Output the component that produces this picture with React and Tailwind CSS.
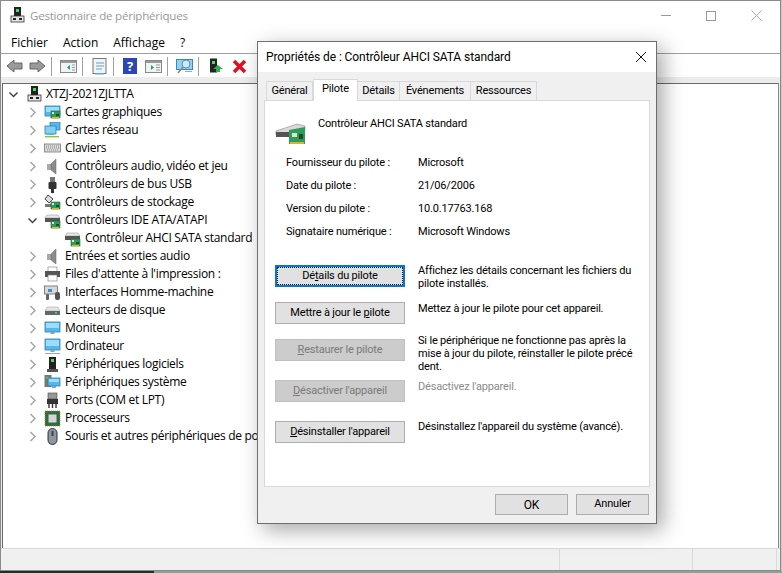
import React from 'react';

const Board = ({ x = 8, y = 9 }) => (
  <g>
    <rect x={x} y={y} width="9" height="7" fill="#2f9a5b" stroke="#1f6a3d" strokeWidth="0.6" />
    <rect x={x + 1} y={y + 1} width="2" height="2" fill="#d7e8c8" />
    <rect x={x + 5} y={y + 3} width="3" height="2" fill="#14502c" />
    <rect x={x + 1} y={y + 6} width="7" height="1.4" fill="#e2b029" />
  </g>
);

const Tower = () => (
  <g>
    <rect x="5" y="1" width="7" height="12" fill="#222" />
    <rect x="7" y="3" width="3" height="3" fill="#4bd964" />
    <rect x="3" y="13" width="11" height="3" fill="#555" />
  </g>
);

const Screen = ({ x = 1, y = 2, w = 15, h = 10 }) => (
  <g>
    <rect x={x} y={y} width={w} height={h} fill="#56b7ea" stroke="#2d7fb3" strokeWidth="0.8" />
    <rect x={x + 1} y={y + 1} width={w - 2} height={h - 5} fill="#9ddcfa" />
    <rect x={x + w / 2 - 2} y={y + h} width="4" height="2" fill="#8fa3ad" />
  </g>
);

const Drive = () => (
  <g>
    <path d="M3 3 L14 3 L16 6 L1 6 Z" fill="#e8e8e8" stroke="#888" strokeWidth="0.5" />
    <rect x="1" y="6" width="15" height="4" fill="#555" />
  </g>
);

const drawings = {
  host: (
    <g>
      <rect x="5" y="0" width="7" height="9" fill="#222" />
      <rect x="7" y="2" width="3" height="3" fill="#4bd964" />
      <rect x="2" y="9" width="13" height="6" fill="#e4e4e4" stroke="#333" strokeWidth="0.8" />
      <rect x="4" y="11" width="3" height="2" fill="#222" />
      <rect x="10" y="11" width="3" height="2" fill="#222" />
    </g>
  ),
  gpu: <g><Screen /><Board x={7} y={7} /></g>,
  net: (
    <g>
      <rect x="6" y="0" width="10" height="8" fill="#56b7ea" stroke="#2d7fb3" strokeWidth="0.8" />
      <rect x="1" y="4" width="11" height="8" fill="#7fd0f5" stroke="#2d7fb3" strokeWidth="0.8" />
      <rect x="3" y="12" width="7" height="1" fill="#6b9" />
      <rect x="1" y="14" width="14" height="1.4" fill="#8bc34a" />
    </g>
  ),
  keyboard: (
    <g>
      <rect x="0.5" y="4" width="16" height="8" fill="#d9d9d9" stroke="#777" strokeWidth="0.8" />
      <path d="M2 6h13M2 8h13M3 10h11" stroke="#8a8a8a" strokeWidth="1" strokeDasharray="1 1" />
    </g>
  ),
  audio: (
    <g>
      <rect x="3" y="6" width="4" height="6" fill="#a9a9a9" />
      <path d="M7 6 L12 1 L12 16 L7 12 Z" fill="#8c8c8c" stroke="#666" strokeWidth="0.5" />
    </g>
  ),
  usb: (
    <g>
      <rect x="6" y="1" width="5" height="5" fill="#777" />
      <rect x="4.5" y="6" width="8" height="7" rx="1" fill="#333" />
      <rect x="7" y="13" width="3" height="4" fill="#333" />
    </g>
  ),
  storage: (
    <g>
      <path d="M4 1 L9 5 L5 9 L1 5 Z" fill="#ddd" stroke="#333" strokeWidth="0.9" />
      <rect x="1" y="10" width="7" height="3" fill="#777" />
      <Board x={7} y={8} />
    </g>
  ),
  ide: <g><Drive /><Board x={7} y={9} /></g>,
  print: (
    <g>
      <rect x="4" y="1" width="9" height="5" fill="#fff" stroke="#777" strokeWidth="0.6" />
      <rect x="1" y="5" width="15" height="6" fill="#555" />
      <rect x="4" y="9" width="9" height="6" fill="#fff" stroke="#777" strokeWidth="0.6" />
    </g>
  ),
  hid: (
    <g>
      <rect x="0.5" y="2" width="13" height="8" fill="#d9d9d9" stroke="#666" strokeWidth="0.8" />
      <rect x="4" y="5" width="4" height="3" fill="#3d8fd1" />
      <rect x="11" y="8" width="5" height="8" rx="2" fill="#555" />
      <rect x="2" y="10" width="3" height="6" rx="1" fill="#666" />
    </g>
  ),
  disk: (
    <g>
      <path d="M3 5 L14 5 L16 9 L1 9 Z" fill="#e4e4e4" stroke="#999" strokeWidth="0.5" />
      <rect x="1" y="9" width="15" height="4" fill="#666" />
      <rect x="11" y="10" width="2" height="1.5" fill="#4bd964" />
    </g>
  ),
  monitor: <Screen />,
  computer: (
    <g>
      <Screen y={1} h={11} />
      <rect x="1" y="15" width="15" height="1" fill="#9aa" />
    </g>
  ),
  soft: <Tower />,
  system: (
    <g>
      <rect x="0.5" y="1" width="7" height="12" fill="#777" />
      <rect x="2" y="3" width="3" height="1.5" fill="#4bd964" />
      <Screen x={4} y={4} w={12} h={8} />
    </g>
  ),
  port: (
    <g>
      <rect x="4" y="1" width="9" height="6" fill="#999" stroke="#444" strokeWidth="0.6" />
      <rect x="3" y="7" width="11" height="5" fill="#333" />
      <path d="M5 12v4M8.5 12v4M12 12v4" stroke="#333" strokeWidth="1.4" />
    </g>
  ),
  cpu: (
    <g>
      <rect x="1" y="1" width="15" height="15" fill="#2e6b46" stroke="#b08b2e" strokeWidth="0.8" strokeDasharray="1 1" />
      <rect x="4.5" y="4.5" width="8" height="8" fill="#d5d5d5" />
    </g>
  ),
  mouse: (
    <g>
      <rect x="4" y="0.5" width="9" height="16" rx="4.5" fill="#8e97a1" stroke="#222" strokeWidth="0.9" />
      <rect x="7.5" y="3" width="2" height="5" fill="#3b4148" />
    </g>
  ),
};

const Icon = ({ name }) => (
  <svg width="17" height="17" viewBox="0 0 17 17" className="shrink-0">
    {drawings[name]}
  </svg>
);

const Collapsed = () => (
  <svg width="11" height="11" viewBox="0 0 11 11" className="shrink-0">
    <path d="M3.500 1 L8 5.500 L3.500 10" fill="none" stroke="#a6a6a6" strokeWidth="1.500" />
  </svg>
);

const Expanded = () => (
  <svg width="11" height="11" viewBox="0 0 11 11" className="shrink-0">
    <path d="M1.500 3.500 L5.500 7.500 L9.500 3.500" fill="none" stroke="#444" strokeWidth="1.500" />
  </svg>
);

const devices = [
  ['gpu', 'Cartes graphiques'],
  ['net', 'Cartes réseau'],
  ['keyboard', 'Claviers'],
  ['audio', 'Contrôleurs audio, vidéo et jeu'],
  ['usb', 'Contrôleurs de bus USB'],
  ['storage', 'Contrôleurs de stockage'],
  ['ide', 'Contrôleurs IDE ATA/ATAPI', 'open'],
  ['ide', 'Contrôleur AHCI SATA standard', 'child'],
  ['audio', 'Entrées et sorties audio'],
  ['print', "Files d'attente à l'impression :"],
  ['hid', 'Interfaces Homme-machine'],
  ['disk', 'Lecteurs de disque'],
  ['monitor', 'Moniteurs'],
  ['computer', 'Ordinateur'],
  ['soft', 'Périphériques logiciels'],
  ['system', 'Périphériques système'],
  ['port', 'Ports (COM et LPT)'],
  ['cpu', 'Processeurs'],
  ['mouse', 'Souris et autres périphériques de pointage'],
];

const Sep = () => <div className="w-px h-[19px] bg-[#a0a0a0] shrink-0" />;

function Toolbar() {
  return (
    <div className="h-[23px] flex items-center pl-[5px] pt-[1px] bg-white shrink-0">
      <svg width="17" height="14" viewBox="0 0 17 14"><path d="M8 1 L1 7 L8 13 V10 H16 V4 H8 Z" fill="#9a9a9a" stroke="#666" /></svg>
      <svg width="17" height="14" viewBox="0 0 17 14" className="ml-[6px]"><path d="M9 1 L16 7 L9 13 V10 H1 V4 H9 Z" fill="#9a9a9a" stroke="#666" /></svg>
      <div className="ml-[5px]"><Sep /></div>
      <svg width="17" height="14" viewBox="0 0 17 14" className="ml-[8px]">
        <rect x="0.5" y="1.500" width="16" height="12" fill="#eef3f6" stroke="#888" />
        <rect x="1" y="2" width="15" height="2" fill="#999" />
        <path d="M10 6 L7 8.500 L10 11 Z" fill="#2e9e5b" />
        <path d="M12 6h3M12 8.500h3M12 11h3" stroke="#999" />
      </svg>
      <div className="ml-[5px]"><Sep /></div>
      <svg width="16" height="17" viewBox="0 0 16 17" className="ml-[9px]">
        <rect x="1" y="0.500" width="13" height="15" fill="#f3f3f3" stroke="#777" />
        <path d="M4 5h8M4 8h8M4 11h6" stroke="#5aa7d8" />
        <rect x="3" y="15" width="9" height="1.500" fill="#5aa7d8" />
      </svg>
      <div className="ml-[5px]"><Sep /></div>
      <div className="ml-[9px] w-[14px] h-[16px] bg-[#2b46b5] text-white text-[13px] font-bold leading-[16px] text-center">?</div>
      <svg width="17" height="14" viewBox="0 0 17 14" className="ml-[8px]">
        <rect x="0.5" y="1.500" width="16" height="12" fill="#eef3f6" stroke="#888" />
        <rect x="1" y="2" width="15" height="2" fill="#999" />
        <path d="M6 6 L9 8.500 L6 11 Z" fill="#2e9e5b" />
        <path d="M11 6h4M11 8.500h4M11 11h4" stroke="#999" />
      </svg>
      <div className="ml-[5px]"><Sep /></div>
      <svg width="17" height="17" viewBox="0 0 17 17" className="ml-[8px]">
        <rect x="0.5" y="1.500" width="16" height="10" fill="#8fd3f5" stroke="#3a88b8" />
        <circle cx="10" cy="6" r="4" fill="#c8ecfb" stroke="#6a8a9a" />
        <path d="M7 9 L2 15" stroke="#8a8a8a" strokeWidth="1.600" />
        <rect x="9" y="13" width="7" height="1" fill="#9aa" />
      </svg>
      <div className="ml-[5px]"><Sep /></div>
      <svg width="15" height="17" viewBox="0 0 15 17" className="ml-[10px]">
        <rect x="1" y="0.500" width="7" height="14" fill="#222" />
        <rect x="3" y="3" width="3" height="3" fill="#4bd964" />
        <path d="M9 7 L14 11 H11 V14 H7 V11 H4 Z" fill="#2bb24c" />
      </svg>
      <svg width="15" height="15" viewBox="0 0 15 15" className="ml-[8px]">
        <path d="M2 2 L13 13 M13 2 L2 13" stroke="#e0101e" strokeWidth="3.500" />
      </svg>
    </div>
  );
}

function Tree() {
  return (
    <div className="flex-1 min-h-0 overflow-hidden bg-white border-t border-l border-r border-t-[#6a6a6a] border-l-[#6a6a6a] border-r-[#8a8a8a] pt-[1px] text-[12px] tracking-[-0.3px] text-black">
      <div className="h-[18px] flex items-center pl-[5px]">
        <Expanded />
        <div className="ml-[7px]"><Icon name="host" /></div>
        <span className="ml-[3px]">XTZJ-2021ZJLTTA</span>
      </div>
      {devices.map(([icon, label, kind]) => (
        <div key={label} className={kind === 'child' ? 'h-[18px] flex items-center pl-[61px]' : 'h-[18px] flex items-center pl-[24px]'}>
          {kind === 'child' ? null : kind === 'open' ? <Expanded /> : <Collapsed />}
          <div className={kind === 'child' ? '' : 'ml-[6px]'}><Icon name={icon} /></div>
          <span className="ml-[4px] whitespace-nowrap">{label}</span>
        </div>
      ))}
    </div>
  );
}

const Underlined = ({ before, letter, after }) => (
  <span>{before}<span className="underline">{letter}</span>{after}</span>
);

const DriverButton = ({ disabled, focused, children }) => {
  if (focused) {
    return (
      <div className="w-[130px] h-[22px] shrink-0 border-2 border-[#0078d7] bg-[#e1e1e1] flex items-center justify-center outline-1 -outline-offset-3 outline-dotted outline-[#111] text-black">
        {children}
      </div>
    );
  }
  return (
    <div className={disabled
      ? 'w-[130px] h-[22px] shrink-0 border border-[#bfbfbf] bg-[#cccccc] flex items-center justify-center text-[#7a7a7a]'
      : 'w-[130px] h-[22px] shrink-0 border border-[#adadad] bg-[#e1e1e1] flex items-center justify-center text-black'}>
      {children}
    </div>
  );
};

const infos = [
  ['Fournisseur du pilote :', 'Microsoft'],
  ['Date du pilote :', '21/06/2006'],
  ['Version du pilote :', '10.0.17763.168'],
  ['Signataire numérique :', 'Microsoft Windows'],
];

const Tab = ({ label, active, className }) => (
  <div className={active
    ? `h-[22px] bg-white border border-b-0 border-[#d9d9d9] flex items-start pt-[1px] justify-center relative z-10 ${className}`
    : `h-[19px] mt-[2px] bg-[#f0f0f0] border border-b-0 border-[#d9d9d9] -ml-px flex items-center justify-center ${className}`}>
    {label}
  </div>
);

function Dialog() {
  return (
    <div className="absolute left-[257px] top-[41px] w-[400px] h-[483px] bg-[#f0f0f0] border border-[#6e6e6e] shadow-[6px_6px_20px_rgba(0,0,0,0.35)] flex flex-col text-[11px] text-black font-['Roboto',sans-serif] tracking-[-0.18px]">
      <div className="h-[30px] bg-white flex items-center justify-between pl-[8px] pr-[9px] shrink-0">
        <span className="text-[12px] tracking-[-0.08px]">Propriétés de : Contrôleur AHCI SATA standard</span>
        <svg width="12" height="12" viewBox="0 0 12 12"><path d="M1 1 L11 11 M11 1 L1 11" stroke="#111" strokeWidth="1" /></svg>
      </div>
      <div className="flex pl-[8px] mt-[7px] h-[22px] shrink-0 relative z-10 items-start">
        <Tab label="Général" className="w-[47px] ml-0" />
        <Tab label="Pilote" active className="w-[45px]" />
        <Tab label="Détails" className="w-[43px]" />
        <Tab label="Événements" className="w-[72px]" />
        <Tab label="Ressources" className="w-[67px]" />
      </div>
      <div className="mx-[6px] -mt-px h-[387px] bg-white border border-[#d9d9d9] shrink-0 pl-[10px] pt-[15px]">
        <div className="flex items-start h-[30px]">
          <svg width="32" height="24" viewBox="0 0 32 24" className="mt-[6px]">
            <path d="M1 9 L22 2 L30 4 L30 8 L8 13 L1 13 Z" fill="#d9d9d9" stroke="#777" strokeWidth="0.5" />
            <path d="M1 10 L14 10 L14 15 L1 15 Z" fill="#555" />
            <path d="M14 8 L30 5 L30 22 L14 22 Z" fill="#2f9a5b" />
            <rect x="17" y="11" width="5" height="4" fill="#d7e8c8" />
            <rect x="24" y="12" width="4" height="5" fill="#14502c" />
            <rect x="15" y="20" width="14" height="2" fill="#e2b029" />
          </svg>
          <span className="ml-[11px] leading-[15px]">Contrôleur AHCI SATA standard</span>
        </div>
        <div className="mt-[9px] flex flex-col gap-[8px] pl-[11px]">
          {infos.map(([k, v]) => (
            <div key={k} className="flex h-[15px] leading-[15px]">
              <div className="w-[132px]">{k}</div>
              <div>{v}</div>
            </div>
          ))}
        </div>
        <div className="mt-[26px] flex gap-[13px] h-[37px]">
          <DriverButton focused><Underlined before="Dé" letter="t" after="ails du pilote" /></DriverButton>
          <p className="leading-[13px] -mt-px whitespace-nowrap">Affichez les détails concernant les fichiers du<br />pilote installés.</p>
        </div>
        <div className="flex gap-[13px] h-[37px]">
          <DriverButton><Underlined before="Mettre à jour le " letter="p" after="ilote" /></DriverButton>
          <p className="leading-[13px] whitespace-nowrap">Mettez à jour le pilote pour cet appareil.</p>
        </div>
        <div className="flex gap-[13px] h-[41px]">
          <DriverButton disabled><Underlined letter="R" after="estaurer le pilote" /></DriverButton>
          <p className="leading-[13px] -mt-[5px] whitespace-nowrap">Si le périphérique ne fonctionne pas après la<br />mise à jour du pilote, réinstaller le pilote précé<br />dent.</p>
        </div>
        <div className="flex gap-[13px] h-[41px]">
          <DriverButton disabled><Underlined letter="D" after="ésactiver l'appareil" /></DriverButton>
          <p className="leading-[13px] text-[#8a8a8a] whitespace-nowrap">Désactivez l'appareil.</p>
        </div>
        <div className="flex gap-[13px]">
          <DriverButton><Underlined letter="D" after="ésinstaller l'appareil" /></DriverButton>
          <p className="leading-[13px] -mt-px whitespace-nowrap">Désinstallez l'appareil du système (avancé).</p>
        </div>
      </div>
      <div className="flex justify-end gap-[8px] pr-[7px] mt-[7px]">
        <div className="w-[73px] h-[21px] border border-[#adadad] bg-[#e1e1e1] flex items-center justify-center text-[12px]">OK</div>
        <div className="w-[73px] h-[21px] border border-[#adadad] bg-[#e1e1e1] flex items-center justify-center">Annuler</div>
      </div>
    </div>
  );
}

export default function App() {
  return (
    <div className="relative w-[782px] h-[573px] overflow-hidden bg-[#c8c8c8] font-['Open_Sans',sans-serif] text-[12px]">
      <div className="w-[781px] h-[571px] border border-[#8a8a8a] bg-white flex flex-col">
        <div className="h-[31px] flex items-center bg-white shrink-0 pl-[8px] pb-[2px]">
          <Icon name="host" />
          <span className="ml-[4px] text-[#999] text-[11.500px] tracking-[-0.2px]">Gestionnaire de périphériques</span>
          <div className="ml-auto flex items-center">
            <div className="w-[10px] h-px bg-[#999] mr-[35px]" />
            <div className="w-[10px] h-[10px] border border-[#999] mr-[35px]" />
            <svg width="11" height="11" viewBox="0 0 11 11" className="mr-[18px]"><path d="M0.500 0.500 L10.500 10.500 M10.500 0.500 L0.500 10.500" stroke="#aaa" /></svg>
          </div>
        </div>
        <div className="h-[22px] flex items-center gap-[15px] pl-[10px] shrink-0 border-b border-[#a0a0a0] text-black">
          <span>Fichier</span><span>Action</span><span>Affichage</span><span>?</span>
        </div>
        <Toolbar />
        <div className="h-[6px] bg-[#ececec] shrink-0" />
        <div className="flex-1 min-h-0 flex flex-col pl-[1px] pr-[1px] bg-[#ececec]">
          <Tree />
        </div>
        <div className="h-[22px] shrink-0 border-t border-[#d9d9d9] bg-[#f0f0f0] flex">
          <div className="w-[559px] border-r border-[#d9d9d9]" />
          <div className="w-[133px] border-r border-[#d9d9d9]" />
          <div className="w-[84px] border-r border-[#d9d9d9]" />
        </div>
      </div>
      <div className="flex h-[2px]">
        <div className="w-[154px] bg-[#2a2a2a]" />
        <div className="flex-1 bg-[#9a9a9a]" />
      </div>
      <Dialog />
    </div>
  );
}
